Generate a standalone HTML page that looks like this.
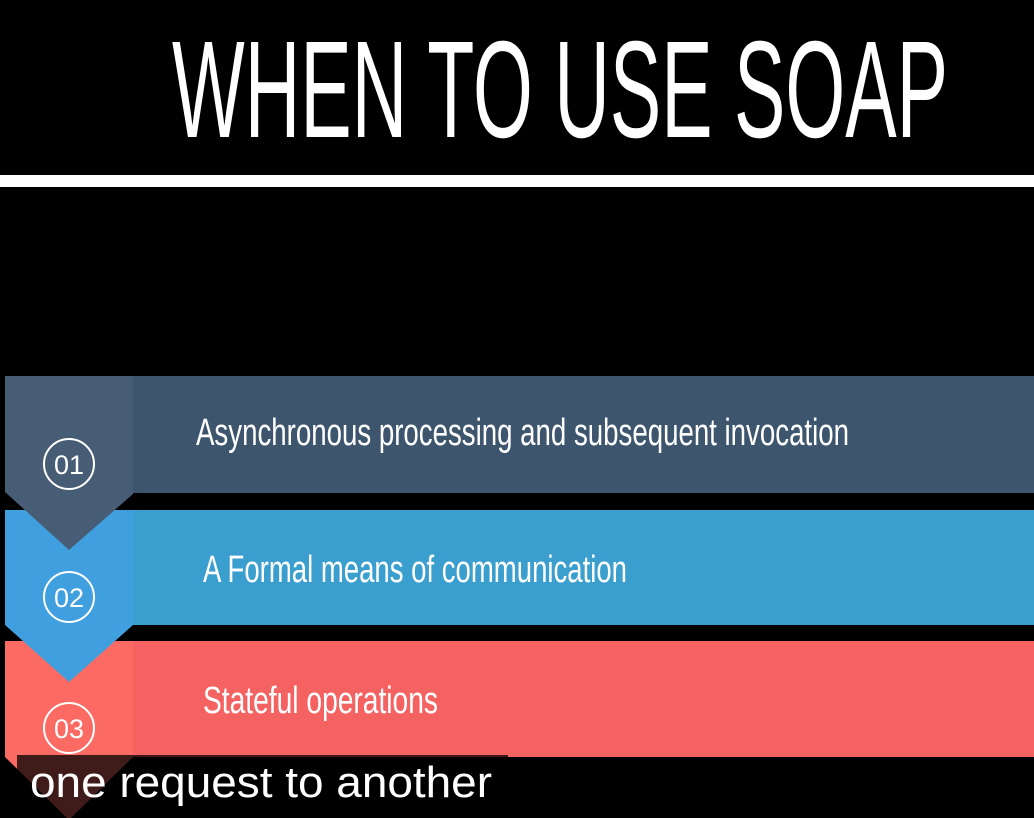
<!DOCTYPE html>
<html><head><meta charset="utf-8"><style>
html,body{margin:0;padding:0;background:#000;width:1034px;height:818px;overflow:hidden}
svg{display:block}
.c{font-family:"Liberation Sans Narrow","Liberation Sans",sans-serif;fill:#fff}
</style></head><body>
<svg width="1034" height="818" viewBox="0 0 1034 818" xmlns="http://www.w3.org/2000/svg">
<rect width="1034" height="818" fill="#000"/>
<text class="c" x="172" y="137" font-size="138" textLength="776" lengthAdjust="spacingAndGlyphs">WHEN TO USE SOAP</text>
<rect x="0" y="175" width="1034" height="12" fill="#fff"/>

<rect x="133" y="641" width="901" height="116" fill="#f56262"/>
<polygon points="5,641 133,641 133,757 69,820 5,757" fill="#fb6b63"/>
<rect x="133" y="510" width="901" height="115" fill="#3a9fcf"/>
<polygon points="5,510 133,510 133,625 69,682 5,625" fill="#3f9fdf"/>
<rect x="133" y="376" width="901" height="117" fill="#3d566d"/>
<polygon points="5,376 133,376 133,494 69,550 5,492" fill="#475d75"/>

<g fill="none" stroke="#fff" stroke-width="2">
<circle cx="69" cy="464" r="25"/>
<circle cx="69" cy="597" r="25"/>
<circle cx="69" cy="728" r="25"/>
</g>
<g font-family="Liberation Sans,sans-serif" font-size="27" fill="#fff" text-anchor="middle">
<text x="69" y="474">01</text>
<text x="69" y="607">02</text>
<text x="69" y="738">03</text>
</g>

<text class="c" x="196" y="445" font-size="38" textLength="653" lengthAdjust="spacingAndGlyphs">Asynchronous processing and subsequent invocation</text>
<text class="c" x="203" y="582" font-size="38" textLength="424" lengthAdjust="spacingAndGlyphs">A Formal means of communication</text>
<text class="c" x="203" y="713" font-size="38" textLength="235" lengthAdjust="spacingAndGlyphs">Stateful operations</text>

<rect x="17" y="755" width="491" height="63" fill="#000" fill-opacity="0.75"/>
<text x="30" y="797" font-family="Liberation Sans,sans-serif" font-size="44" fill="#fff" textLength="462" lengthAdjust="spacingAndGlyphs">one request to another</text>
</svg>
</body></html>
